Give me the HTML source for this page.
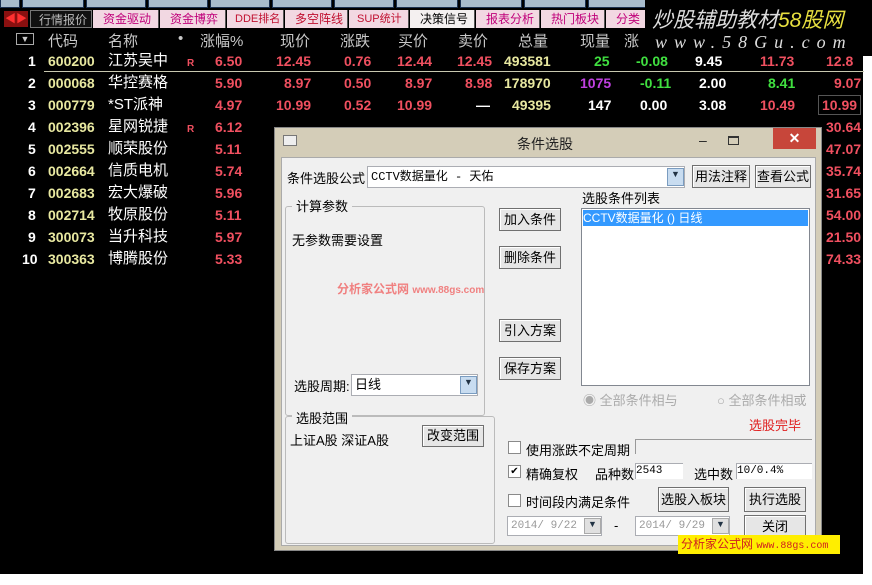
<!DOCTYPE html>
<html><head><meta charset="utf-8"><style>
*{margin:0;padding:0;box-sizing:border-box}
body{width:872px;height:585px;background:#fff;position:relative;overflow:hidden;font-family:"Liberation Sans","Noto Sans CJK SC",sans-serif}
.a{position:absolute;white-space:nowrap}
#bg{position:absolute;left:0;top:0;width:863px;height:574px;background:#000}
.tb{position:absolute;top:-4px;height:12px;background:#a8bccc;border:1px solid #1a3050}
.tab{position:absolute;top:10px;height:18px;background:#f2d8e2;color:#c0007a;font-size:12px;line-height:18px;padding-left:10px;border-right:1px solid #555;white-space:nowrap;overflow:hidden}
.hd{position:absolute;top:30px;color:#c8c8c8;font-size:15px}
.r{position:absolute;font-size:14px;font-weight:bold;height:22px;line-height:22px}
.nm{font-weight:normal;font-size:15px;color:#fff}
.red{color:#f05060}.yel{color:#e8e8a0}.grn{color:#40e040}.mag{color:#c040e0}.wht{color:#fff}
#dlg{position:absolute;left:274px;top:127px;width:548px;height:424px;background:#d4cdb8;border:1px solid #888}
#body{position:absolute;left:6px;top:29px;width:535px;height:389px;background:#f0f0f0;border:1px solid #aaa}
.t{position:absolute;font-size:13px;color:#000;white-space:nowrap}
.btn{position:absolute;background:#e6e6e6;border:1px solid #707070;font-size:13px;text-align:center;box-shadow:inset 1px 1px 0 #fff}
.grp{position:absolute;border:1px solid #bbb;border-radius:3px}
.inp{position:absolute;background:#fff;border:1px solid #abadb3;font-size:11px;font-family:"Liberation Mono","Noto Sans CJK SC",monospace}
.cb{position:absolute;width:13px;height:13px;border:1px solid #8a8a8a;background:#fff}
.dd{position:absolute;width:17px;background:#c8dcf0;border:1px solid #7a9cc0;font-size:9px;text-align:center;color:#234}
</style></head><body>
<div id="bg"></div>
<div class="tb" style="left:0;width:20px"></div>
<div class="tb" style="left:22px;width:62px"></div>
<div class="tb" style="left:86px;width:60px"></div>
<div class="tb" style="left:148px;width:60px"></div>
<div class="tb" style="left:210px;width:60px"></div>
<div class="tb" style="left:272px;width:60px"></div>
<div class="tb" style="left:334px;width:60px"></div>
<div class="tb" style="left:396px;width:62px"></div>
<div class="tb" style="left:460px;width:62px"></div>
<div class="tb" style="left:524px;width:62px"></div>
<div class="tb" style="left:588px;width:62px"></div>
<div class="a" style="left:4px;top:11px;width:24px;height:16px;background:#8a1010;color:#ff3030;font-size:11px;line-height:16px;text-align:center">◀▶</div>
<div class="tab" style="left:30px;width:62px;background:#111;color:#bbb;padding-left:8px;border:1px solid #777">行情报价</div>
<div class="tab" style="left:93px;width:66px">资金驱动</div>
<div class="tab" style="left:160px;width:66px">资金博弈</div>
<div class="tab" style="left:227px;width:57px;color:#c01030;font-size:11px;padding-left:8px">DDE排名</div>
<div class="tab" style="left:285px;width:63px;color:#c01030">多空阵线</div>
<div class="tab" style="left:349px;width:60px;color:#c01030;font-size:11px;padding-left:8px">SUP统计</div>
<div class="tab" style="left:410px;width:65px;background:#f4f0f0;color:#000">决策信号</div>
<div class="tab" style="left:476px;width:64px">报表分析</div>
<div class="tab" style="left:541px;width:64px">热门板块</div>
<div class="tab" style="left:606px;width:40px">分类</div>
<div class="a" style="left:16px;top:33px;width:18px;height:12px;border:1px solid #aaa;color:#ccc;font-size:9px;line-height:10px;text-align:center">▼</div>
<div class="hd" style="left:48px">代码</div>
<div class="hd" style="left:108px">名称</div>
<div class="hd" style="left:178px">•</div>
<div class="hd" style="left:200px">涨幅%</div>
<div class="hd" style="left:280px">现价</div>
<div class="hd" style="left:340px">涨跌</div>
<div class="hd" style="left:398px">买价</div>
<div class="hd" style="left:458px">卖价</div>
<div class="hd" style="left:518px">总量</div>
<div class="hd" style="left:580px">现量</div>
<div class="hd" style="left:624px">涨</div>
<div class="a" style="left:44px;top:71px;width:820px;height:1px;background:#c8c8b0"></div>
<div class="r" style="top:50px;left:0;width:870px">
<span class="a wht" style="left:28px">1</span><span class="a yel" style="left:48px">600200</span><span class="a nm" style="left:108px">江苏吴中</span><span class="a red" style="left:187px;font-size:10px;top:3px">R</span><span class="a red" style="left:215px">6.50</span><span class="a red" style="left:276px">12.45</span><span class="a red" style="left:344px">0.76</span><span class="a red" style="left:397px">12.44</span><span class="a red" style="left:457px">12.45</span><span class="a yel" style="left:504px">493581</span><span class="a grn" style="left:594px">25</span><span class="a grn" style="left:636px">-0.08</span><span class="a wht" style="left:695px">9.45</span><span class="a red" style="left:760px">11.73</span><span class="a red" style="left:826px">12.8</span></div>
<div class="r" style="top:72px;left:0;width:870px">
<span class="a wht" style="left:28px">2</span><span class="a yel" style="left:48px">000068</span><span class="a nm" style="left:108px">华控赛格</span><span class="a red" style="left:215px">5.90</span><span class="a red" style="left:284px">8.97</span><span class="a red" style="left:344px">0.50</span><span class="a red" style="left:405px">8.97</span><span class="a red" style="left:465px">8.98</span><span class="a yel" style="left:504px">178970</span><span class="a mag" style="left:580px">1075</span><span class="a grn" style="left:640px">-0.11</span><span class="a wht" style="left:699px">2.00</span><span class="a grn" style="left:768px">8.41</span><span class="a red" style="left:834px">9.07</span></div>
<div class="r" style="top:94px;left:0;width:870px">
<span class="a wht" style="left:28px">3</span><span class="a yel" style="left:48px">000779</span><span class="a nm" style="left:108px">*ST派神</span><span class="a red" style="left:215px">4.97</span><span class="a red" style="left:276px">10.99</span><span class="a red" style="left:344px">0.52</span><span class="a red" style="left:397px">10.99</span><span class="a wht" style="left:476px">—</span><span class="a yel" style="left:512px">49395</span><span class="a wht" style="left:588px">147</span><span class="a wht" style="left:640px">0.00</span><span class="a wht" style="left:699px">3.08</span><span class="a red" style="left:760px">10.49</span><span class="a red" style="left:818px;border:1px solid #555;padding:0 3px;height:20px;line-height:18px;top:1px">10.99</span></div>
<div class="r" style="top:116px;left:0;width:870px">
<span class="a wht" style="left:28px">4</span><span class="a yel" style="left:48px">002396</span><span class="a nm" style="left:108px">星网锐捷</span><span class="a red" style="left:187px;font-size:10px;top:3px">R</span><span class="a red" style="left:215px">6.12</span><span class="a red" style="left:826px">30.64</span></div>
<div class="r" style="top:138px;left:0"><span class="a wht" style="left:28px">5</span><span class="a yel" style="left:48px">002555</span><span class="a nm" style="left:108px">顺荣股份</span><span class="a red" style="left:215px">5.11</span></div>
<div class="r" style="top:160px;left:0"><span class="a wht" style="left:28px">6</span><span class="a yel" style="left:48px">002664</span><span class="a nm" style="left:108px">信质电机</span><span class="a red" style="left:215px">5.74</span></div>
<div class="r" style="top:182px;left:0"><span class="a wht" style="left:28px">7</span><span class="a yel" style="left:48px">002683</span><span class="a nm" style="left:108px">宏大爆破</span><span class="a red" style="left:215px">5.96</span></div>
<div class="r" style="top:204px;left:0"><span class="a wht" style="left:28px">8</span><span class="a yel" style="left:48px">002714</span><span class="a nm" style="left:108px">牧原股份</span><span class="a red" style="left:215px">5.11</span></div>
<div class="r" style="top:226px;left:0"><span class="a wht" style="left:28px">9</span><span class="a yel" style="left:48px">300073</span><span class="a nm" style="left:108px">当升科技</span><span class="a red" style="left:215px">5.97</span></div>
<div class="r" style="top:248px;left:0"><span class="a wht" style="left:22px">10</span><span class="a yel" style="left:48px">300363</span><span class="a nm" style="left:108px">博腾股份</span><span class="a red" style="left:215px">5.33</span></div>
<div class="r red" style="top:138px;left:826px">47.07</div>
<div class="r red" style="top:160px;left:826px">35.74</div>
<div class="r red" style="top:182px;left:826px">31.65</div>
<div class="r red" style="top:204px;left:826px">54.00</div>
<div class="r red" style="top:226px;left:826px">21.50</div>
<div class="r red" style="top:248px;left:826px">74.33</div>
<div class="a" style="left:645px;top:0;width:227px;height:56px;background:#000"></div>
<div class="a" style="left:652px;top:4px;font-size:21px;color:#ddd;font-style:italic">炒股辅助教材<span style="color:#e8e040">58股网</span></div>
<div class="a" style="left:655px;top:32px;font-size:18px;color:#ddd;font-style:italic;letter-spacing:7px;font-family:'Liberation Serif',serif">www.58Gu.com</div>
<div id="dlg">
<div class="a" style="left:8px;top:7px;width:14px;height:11px;border:1px solid #777;background:#eee"></div>
<div class="a" style="left:242px;top:6px;font-size:14px;color:#222">条件选股</div>
<div class="a" style="left:424px;top:4px;font-size:14px;color:#222">–</div>
<div class="a" style="left:453px;top:8px;width:11px;height:9px;border:1px solid #333;border-top-width:2px"></div>
<div class="a" style="left:498px;top:0;width:43px;height:21px;background:#c7463a;color:#fff;font-size:14px;text-align:center;line-height:20px;font-weight:bold">✕</div>
<div id="body">
<div class="t" style="left:5px;top:10px">条件选股公式</div>
<div class="inp" style="left:85px;top:8px;width:318px;height:22px;font-size:12px;line-height:20px;padding-left:3px">CCTV数据量化 - 天佑</div>
<div class="dd" style="left:385px;top:10px;height:18px">▼</div>
<div class="btn" style="left:410px;top:7px;width:58px;height:23px;line-height:21px">用法注释</div>
<div class="btn" style="left:473px;top:7px;width:56px;height:23px;line-height:21px">查看公式</div>
<div class="grp" style="left:3px;top:48px;width:200px;height:210px"></div>
<div class="t" style="left:10px;top:38px;background:#f0f0f0;padding:0 4px">计算参数</div>
<div class="t" style="left:10px;top:72px">无参数需要设置</div>
<div class="t" style="left:55px;top:122px;color:#f08080;font-weight:bold;font-size:12px">分析家公式网 <span style="font-size:10px">www.88gs.com</span></div>
<div class="t" style="left:12px;top:218px">选股周期:</div>
<div class="inp" style="left:69px;top:216px;width:127px;height:22px;font-size:13px;line-height:20px;padding-left:3px;font-family:'Liberation Sans','Noto Sans CJK SC',sans-serif">日线</div>
<div class="dd" style="left:178px;top:218px;height:18px">▼</div>
<div class="btn" style="left:217px;top:50px;width:62px;height:23px;line-height:21px">加入条件</div>
<div class="btn" style="left:217px;top:88px;width:62px;height:23px;line-height:21px">删除条件</div>
<div class="btn" style="left:217px;top:161px;width:62px;height:23px;line-height:21px">引入方案</div>
<div class="btn" style="left:217px;top:199px;width:62px;height:23px;line-height:21px">保存方案</div>
<div class="t" style="left:300px;top:30px">选股条件列表</div>
<div class="a" style="left:299px;top:50px;width:229px;height:178px;background:#fff;border:1px solid #828790"></div>
<div class="a" style="left:301px;top:52px;width:225px;height:16px;background:#3399ff;color:#fff;font-size:12px;line-height:16px">CCTV数据量化 () 日线</div>
<div class="t" style="left:301px;top:232px;color:#aaa">◉ 全部条件相与</div>
<div class="t" style="left:435px;top:232px;color:#aaa">○ 全部条件相或</div>
<div class="grp" style="left:3px;top:258px;width:210px;height:128px"></div>
<div class="t" style="left:10px;top:250px;background:#f0f0f0;padding:0 4px">选股范围</div>
<div class="t" style="left:8px;top:272px">上证A股 深证A股</div>
<div class="btn" style="left:140px;top:267px;width:62px;height:22px;line-height:20px">改变范围</div>
<div class="t" style="left:467px;top:257px;color:#e02020">选股完毕</div>
<div class="cb" style="left:226px;top:283px"></div>
<div class="t" style="left:244px;top:282px">使用涨跌不定周期</div>
<div class="a" style="left:353px;top:281px;width:177px;height:15px;border-top:1px solid #999;border-left:1px solid #999"></div>
<div class="cb" style="left:226px;top:307px;font-size:10px;line-height:11px;text-align:center">✔</div>
<div class="t" style="left:244px;top:306px">精确复权</div>
<div class="t" style="left:313px;top:306px">品种数</div>
<div class="inp" style="left:353px;top:305px;width:48px;height:16px;border-width:1px 0 0 1px;line-height:14px">2543</div>
<div class="t" style="left:412px;top:306px">选中数</div>
<div class="inp" style="left:454px;top:305px;width:76px;height:16px;border-width:1px 0 0 1px;line-height:14px">10/0.4%</div>
<div class="cb" style="left:226px;top:336px"></div>
<div class="t" style="left:244px;top:334px">时间段内满足条件</div>
<div class="btn" style="left:376px;top:329px;width:71px;height:25px;line-height:23px">选股入板块</div>
<div class="btn" style="left:462px;top:329px;width:62px;height:25px;line-height:23px">执行选股</div>
<div class="inp" style="left:225px;top:358px;width:95px;height:20px;line-height:18px;color:#999;padding-left:3px">2014/ 9/22</div>
<div class="dd" style="left:302px;top:360px;height:16px;background:#e0e0e0;border-color:#aaa">▼</div>
<div class="t" style="left:332px;top:360px">-</div>
<div class="inp" style="left:353px;top:358px;width:95px;height:20px;line-height:18px;color:#999;padding-left:3px">2014/ 9/29</div>
<div class="dd" style="left:430px;top:360px;height:16px;background:#e0e0e0;border-color:#aaa">▼</div>
<div class="btn" style="left:462px;top:357px;width:62px;height:24px;line-height:22px">关闭</div>
</div>
</div>
<div class="a" style="left:678px;top:535px;width:162px;height:19px;background:#ffee00;color:#d02020;font-size:12px;line-height:19px;padding-left:3px">分析家公式网 <span style="font-size:10px;font-family:'Liberation Mono',monospace">www.88gs.com</span></div>
</body></html>
